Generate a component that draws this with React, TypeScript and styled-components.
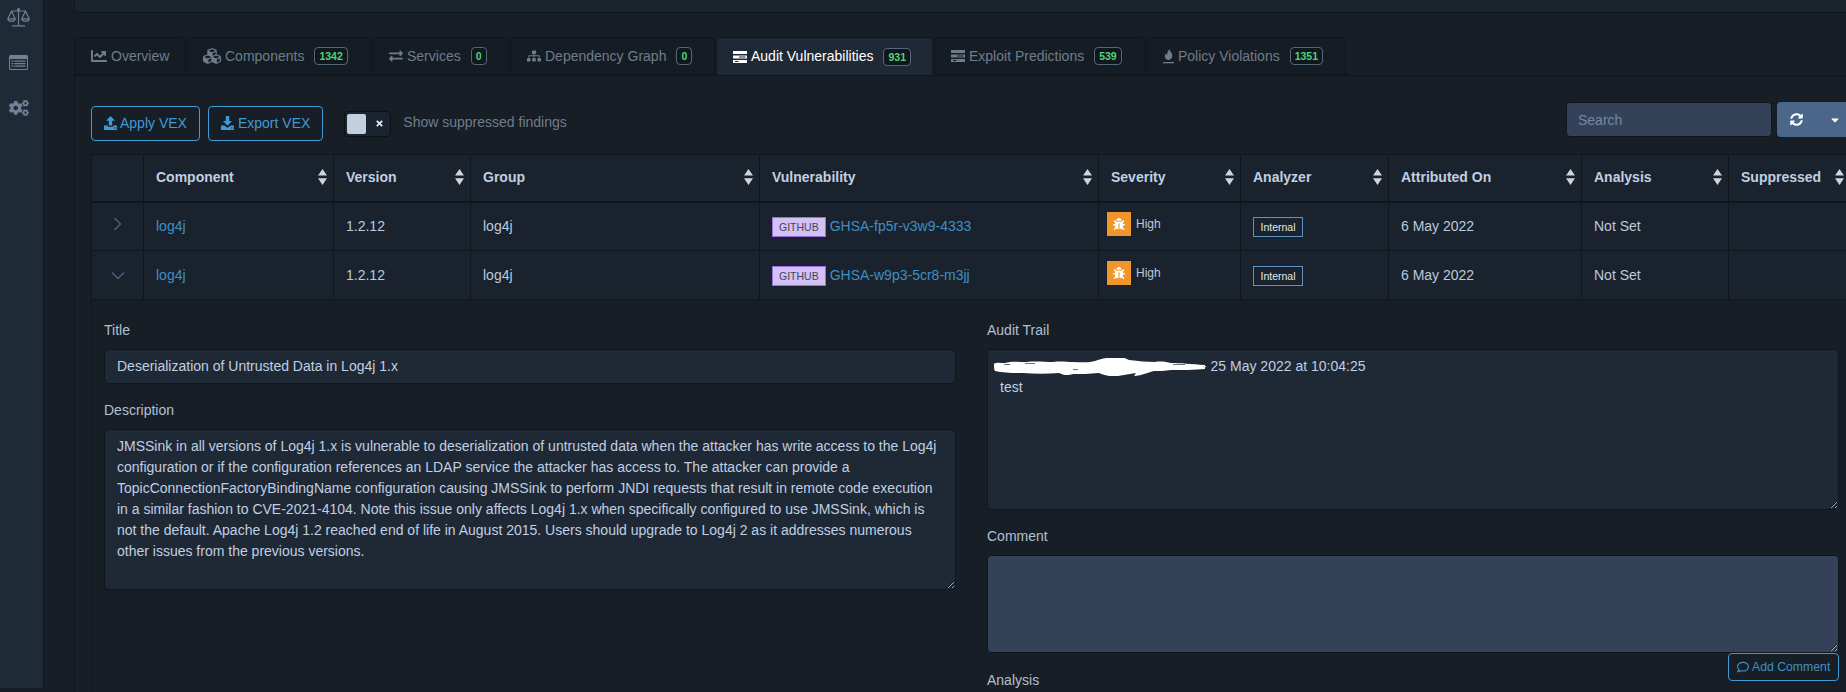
import React from "react";
import styled, { createGlobalStyle } from "styled-components";
import { FaChartLine, FaCubes, FaExchangeAlt, FaSitemap, FaBug, FaSyncAlt, FaRegComment, FaCaretDown, FaCogs } from "react-icons/fa";

const Global = createGlobalStyle`
  html, body { margin: 0; padding: 0; width: 1846px; height: 692px; overflow: hidden; background: #171e26; }
  body { font-family: "Liberation Sans", Arial, sans-serif; font-size: 14px; line-height: 21px; color: #c0cfe2; }
  * { box-sizing: border-box; }
`;

const Page = styled.div`
  display: flex;
  width: 1846px;
  height: 692px;
  overflow: hidden;
`;
const Sidebar = styled.nav`
  flex: none;
  width: 44px;
  height: 688px;
  background: #1f2a37;
  border-right: 1px solid #10161d;
  color: #6f8196;
  display: flex;
  flex-direction: column;
  padding-right: 6px;
`;
const SideItems = styled.div`
  margin-top: -5px;
  display: flex;
  flex-direction: column;
`;
const SideItem = styled.div`
  height: 45px;
  display: flex;
  align-items: center;
  justify-content: center;
`;
const Main = styled.main`
  flex: none;
  width: 1802px;
  margin-left: 30px;
`;
const TopCard = styled.div`
  height: 13px;
  margin-bottom: 24px;
  background: #1b242e;
  border: 1px solid #10161d;
  border-top: 0;
  border-right: 0;
  border-bottom-left-radius: 4px;
`;
const Tabs = styled.div`
  display: flex;
  height: 38px;
  gap: 1px;
`;
const Tab = styled.div<{ $active?: boolean; $w: number }>`
  display: flex;
  align-items: center;
  padding: 0 0 0 16px;
  width: ${(p) => p.$w}px;
  background: ${(p) => (p.$active ? "#1f2935" : "#151c24")};
  color: ${(p) => (p.$active ? "#ffffff" : "#6f7c8a")};
  border: 1px solid #10161d;
  border-bottom: ${(p) => (p.$active ? "0" : "1px solid #10161d")};
  border-radius: 4px 4px 0 0;
  white-space: nowrap;
`;
const TabIcon = styled.span`
  display: inline-flex;
  margin-right: 4px;
`;
const Count = styled.span`
  display: inline-block;
  margin-left: 10px;
  height: 18px;
  line-height: 16px;
  padding: 0 4px;
  font-size: 10.5px;
  font-weight: 700;
  color: #4fd37a;
  background: #10181e;
  border: 1px solid #56677a;
  border-radius: 4px;
`;
const Panel = styled.section`
  border-top: 1px solid #10161d;
  border-left: 1px solid #10161d;
  padding: 0 0 0 16px;
  width: 1790px;
  height: 640px;
  background: #171e26;
`;
const Toolbar = styled.div`
  display: flex;
  justify-content: space-between;
  align-items: flex-start;
  width: 1759px;
  padding-top: 26px;
  margin-bottom: 13px;
`;
const ToolLeft = styled.div`
  display: flex;
  align-items: center;
  margin-top: 4px;
  height: 35px;
`;
const OutlineButton = styled.button`
  display: inline-flex;
  align-items: center;
  gap: 3px;
  height: 35px;
  padding: 0 12px 1px;
  margin-right: 8px;
  background: transparent;
  color: #3f9ad6;
  border: 1px solid #3f9ad6;
  border-radius: 4px;
  font: 14px "Liberation Sans", Arial, sans-serif;
`;
const ExportButton = styled(OutlineButton)`
  gap: 4px;
`;
const Toggle = styled.div`
  width: 47px;
  height: 26px;
  margin: 0 12px 0 13px;
  padding: 2px;
  display: flex;
  align-items: center;
  background: #1a2430;
  border: 1px solid #0c1116;
  border-radius: 4px;
  color: #e4e9f0;
`;
const Knob = styled.div`
  width: 19px;
  height: 20px;
  margin-right: 10px;
  background: #c2cfe1;
  border-radius: 2px;
`;
const ToggleLabel = styled.span`
  color: #6f7c8a;
  margin-top: -2px;
`;
const ToolRight = styled.div`
  display: flex;
  gap: 5px;
`;
const Search = styled.input`
  width: 206px;
  height: 35px;
  padding: 0 11px;
  background: #334259;
  border: 1px solid #10161d;
  border-radius: 4px;
  color: #c0cfe2;
  font: 14px "Liberation Sans", Arial, sans-serif;
  &::placeholder { color: #7388a5; opacity: 1; }
`;
const SplitButton = styled.div`
  display: flex;
  width: 73px;
  height: 35px;
  align-items: center;
  background: #4a6689;
  border-radius: 4px 0 0 4px;
  color: #fff;
  padding: 0 9px 0 13px;
  justify-content: space-between;
`;
const Table = styled.table`
  width: 1759px;
  table-layout: fixed;
  border-collapse: collapse;
  background: #1a232d;
`;
const Col = styled.col<{ $w: number }>`
  width: ${(p) => p.$w}px;
`;
const Th = styled.th`
  height: 47px;
  padding: 0 6px 1px 12px;
  text-align: left;
  font-weight: 700;
  color: #c0cfe2;
  border: 1px solid #10161d;
  border-bottom: 2px solid #10161d;
`;
const ThInner = styled.div`
  display: flex;
  align-items: center;
  justify-content: space-between;
`;
const Td = styled.td`
  height: 49px;
  padding: 0 12px;
  color: #bccadb;
  border: 1px solid #10161d;
`;
const ChevronCell = styled(Td)`
  padding: 0;
  text-align: center;
  color: #4a6180;
`;
const Link = styled.a`
  color: #3f8fc4;
`;
const SourceBadge = styled.span`
  display: inline-block;
  height: 20px;
  line-height: 18px;
  padding: 0 6px;
  margin-right: 4px;
  font-size: 10.5px;
  color: #44435a;
  background: #d3c0f5;
  border: 1px solid #9b6ddf;
`;
const SevCell = styled(Td)`
  padding: 0 0 0 8px;
`;
const Severity = styled.div`
  display: flex;
  align-items: center;
  gap: 5px;
  font-size: 12px;
  margin-top: -4px;
`;
const SevBox = styled.span`
  width: 24px;
  height: 24px;
  background: #f0972b;
  color: #fff;
  display: flex;
  align-items: center;
  justify-content: center;
`;
const AnalyzerBadge = styled.span`
  display: inline-block;
  height: 20px;
  line-height: 18px;
  padding: 0 6.5px;
  font-size: 10.5px;
  color: #e0e8f0;
  border: 1px solid #5d94c8;
`;
const DetailCell = styled.td`
  padding: 0;
  height: 400px;
  vertical-align: top;
  background: #171e26;
  border-left: 1px solid #10161d;
`;
const DetailGrid = styled.div`
  display: grid;
  grid-template-columns: 852px 852px;
  column-gap: 31px;
  padding: 20px 12px 0;
`;
const Group = styled.div`
  margin-bottom: 16px;
`;
const Label = styled.label`
  display: block;
  margin-bottom: 8px;
  color: #b1c0d3;
  font-weight: 400;
`;
const Field = styled.div`
  height: 35px;
  padding: 6px 12px;
  background: #1f2935;
  border: 1px solid #10161d;
  border-radius: 4px;
  color: #c0cfe2;
`;
const Area = styled.textarea<{ $h: number; $empty?: boolean }>`
  display: block;
  width: 100%;
  height: ${(p) => p.$h}px;
  padding: 6px 12px;
  background: ${(p) => (p.$empty ? "#334259" : "#1f2935")};
  border: 1px solid #10161d;
  border-radius: 4px;
  color: #c0cfe2;
  font: 14px/21px "Liberation Sans", Arial, sans-serif;
  resize: vertical;
  outline: none;
`;
const Trail = styled.div`
  height: 161px;
  padding: 6px 12px;
  background: #1f2935;
  border: 1px solid #10161d;
  border-radius: 4px;
  overflow: auto;
  resize: vertical;
  color: #c0cfe2;
`;
const TrailHead = styled.div`
  display: flex;
  align-items: center;
  margin-left: -7px;
  height: 21px;
  white-space: pre;
`;
const Dash = styled.span`
  margin-left: -3px;
`;
const CommentActions = styled.div`
  display: flex;
  justify-content: flex-end;
  height: 13px;
`;
const SmallButton = styled.button`
  flex: none;
  display: inline-flex;
  align-items: center;
  gap: 3px;
  height: 28px;
  width: 111px;
  padding: 0 0 0 8px;
  background: #171e26;
  color: #3f8fc4;
  border: 1px solid #3f9ad6;
  border-radius: 4px;
  white-space: nowrap;
  font: 12.25px "Liberation Sans", Arial, sans-serif;
`;
const AnalysisLabel = styled(Label)`
  margin-top: -12px;
`;

const Sort = () => (
  <svg width="9" height="16" viewBox="0 0 9 16" fill="#d0d4d9" style={{ flex: "none" }}>
    <path d="M4.5 0 9 6.6H0zM0 9.2h9L4.5 16z" />
  </svg>
);
const Scale = () => (
  <svg width="23" height="19" viewBox="0 0 23 19" fill="none" stroke="currentColor" strokeWidth="1.2">
    <path d="M11.5 1v16M5 17.8h13M4 3h15" />
    <circle cx="11.5" cy="1.6" r="1" />
    <path d="M4.5 3 1 10.5M4.5 3 8 10.5M18.5 3 15 10.5M18.5 3 22 10.5M.8 10.8c.6 3.2 6.800 3.200 7.400 0zM14.800 10.800c.6 3.200 6.800 3.200 7.400 0z" />
  </svg>
);
const ListPanel = () => (
  <svg width="19" height="15" viewBox="0 0 19 15" fill="currentColor">
    <path fillRule="evenodd" d="M1.500 0h16A1.500 1.500 0 0 1 19 1.500v12a1.500 1.500 0 0 1-1.500 1.500h-16A1.500 1.500 0 0 1 0 13.500v-12A1.500 1.500 0 0 1 1.500 0zM1 4v9.500c0 .3.200.5.500.5h16c.3 0 .5-.2.500-.5V4z" />
    <path d="M2.500 5.500h2v1.200h-2zM5.500 5.500h11v1.200h-11zM2.500 8h2v1.200h-2zM5.500 8h11v1.200h-11zM2.500 10.500h2v1.200h-2zM5.500 10.500h11v1.200h-11z" />
  </svg>
);
const Tasks = () => (
  <svg width="14" height="12" viewBox="0 0 14 12" fill="currentColor">
    <path fillRule="evenodd" d="M0 0h14v3H0zM0 4.500h14v3H0zM6 5.500v1h6.500v-1zM0 9h14v3H0zM2 10v1h3.500v-1z" />
  </svg>
);
const Flame = () => (
  <svg width="11" height="15" viewBox="0 0 11 15" fill="currentColor">
    <path d="M6.500 0c.5 2.500 2.800 3.800 2.800 6.800 0 2.300-1.700 4.200-3.800 4.200S1.800 9.300 1.800 7.200c0-1.400.7-2.200 1.300-3 .1 1 .4 1.500 1 1.800C3.900 3.800 5 1.800 6.500 0z" />
    <path d="M0 13h11v1.300H0z" />
  </svg>
);
const Upload = () => (
  <svg width="13" height="14" viewBox="0 0 13 14" fill="currentColor">
    <path d="M6.500 0 11 4.700H8.200V9.500H4.800V4.700H2z" />
    <path fillRule="evenodd" d="M0 9.500h3.800v1.300h5.400V9.500H13V14H0zM10 11.500v1h.9v-1zM11.500 11.500v1h.9v-1z" />
  </svg>
);
const Download = () => (
  <svg width="13" height="14" viewBox="0 0 13 14" fill="currentColor">
    <path d="M4.800 0h3.400v5H11L6.500 9.800 2 5h2.800z" />
    <path fillRule="evenodd" d="M0 9.500h3.200l3.300 2.300 3.300-2.300H13V14H0zM10 11.500v1h.9v-1zM11.500 11.500v1h.9v-1z" />
  </svg>
);
const Cross = () => (
  <svg width="7" height="7" viewBox="0 0 7 7" stroke="currentColor" strokeWidth="1.800">
    <path d="M.8.8l5.400 5.400M6.200.8.800 6.200" />
  </svg>
);
const ChevronRight = () => (
  <svg width="9" height="14" viewBox="0 0 9 14" fill="none" stroke="currentColor" strokeWidth="1.400">
    <path d="M1.500 1 7.500 7l-6 6" />
  </svg>
);
const ChevronDown = () => (
  <svg width="14" height="9" viewBox="0 0 14 9" fill="none" stroke="currentColor" strokeWidth="1.400">
    <path d="M1 1.500 7 7.500l6-6" />
  </svg>
);
const Redaction = () => (
  <svg width="212" height="18" viewBox="0 0 212 18" style={{ flex: "none" }}>
    <path fill="#ffffff" d="M0 6c4-2 8-1 12-1 6-2 14-1 22-1 8-1 18 0 26 0 8-1 14 0 20 0 8 0 16 1 22-1 6-2 10-3 18-4 8-1 12 1 16 3 10 1 18 2 26 2 6-1 12 0 16 1 10 0 20 1 34 2 1 1 1 3 0 4-10 1-24 1-34 1-6 1-12 1-17 1-8 2-14 5-20 5 1-1 1-2 2-3-6 1-12 2-18 3-8 1-14-1-19-3-10 1-18 1-26 1-6 2-10 1-14-1-12 1-24 1-36 0-10 0-20 0-28-2-1-1-1-4-1-7z" />
    <path fill="#3a4656" d="M11 6h6v.8h-6zM32 5h10v.8H32zM80 11h5v.8h-5zM180 6h12v.8h-12z" />
  </svg>
);

const columns = [
  { w: 52, t: "" },
  { w: 190, t: "Component" },
  { w: 137, t: "Version" },
  { w: 289, t: "Group" },
  { w: 339, t: "Vulnerability" },
  { w: 142, t: "Severity" },
  { w: 148, t: "Analyzer" },
  { w: 193, t: "Attributed On" },
  { w: 147, t: "Analysis" },
  { w: 122, t: "Suppressed" },
];

const tabs = [
  { w: 111, icon: <FaChartLine size={16} />, t: "Overview" },
  { w: 185, icon: <FaCubes size={18} />, t: "Components", c: "1342" },
  { w: 137, icon: <FaExchangeAlt size={14} />, t: "Services", c: "0" },
  { w: 205, icon: <FaSitemap size={14} />, t: "Dependency Graph", c: "0" },
  { w: 217, icon: <Tasks />, t: "Audit Vulnerabilities", c: "931", a: true },
  { w: 211, icon: <Tasks />, t: "Exploit Predictions", c: "539" },
  { w: 200, icon: <Flame />, t: "Policy Violations", c: "1351" },
];

const description =
  "JMSSink in all versions of Log4j 1.x is vulnerable to deserialization of untrusted data when the attacker has write access to the Log4j configuration or if the configuration references an LDAP service the attacker has access to. The attacker can provide a TopicConnectionFactoryBindingName configuration causing JMSSink to perform JNDI requests that result in remote code execution in a similar fashion to CVE-2021-4104. Note this issue only affects Log4j 1.x when specifically configured to use JMSSink, which is not the default. Apache Log4j 1.2 reached end of life in August 2015. Users should upgrade to Log4j 2 as it addresses numerous other issues from the previous versions.";

const rows = [
  { id: "GHSA-fp5r-v3w9-4333", open: false },
  { id: "GHSA-w9p3-5cr8-m3jj", open: true },
];

export default function App() {
  return (
    <Page>
      <Global />
      <Sidebar>
        <SideItems>
          <SideItem><Scale /></SideItem>
          <SideItem><ListPanel /></SideItem>
          <SideItem><FaCogs size={20} /></SideItem>
        </SideItems>
      </Sidebar>
      <Main>
        <TopCard />
        <Tabs>
          {tabs.map((t) => (
            <Tab key={t.t} $active={t.a} $w={t.w}>
              <TabIcon>{t.icon}</TabIcon>
              {t.t}
              {t.c && <Count>{t.c}</Count>}
            </Tab>
          ))}
        </Tabs>
        <Panel>
          <Toolbar>
            <ToolLeft>
              <OutlineButton><Upload />Apply VEX</OutlineButton>
              <ExportButton><Download />Export VEX</ExportButton>
              <Toggle><Knob /><Cross /></Toggle>
              <ToggleLabel>Show suppressed findings</ToggleLabel>
            </ToolLeft>
            <ToolRight>
              <Search placeholder="Search" />
              <SplitButton><FaSyncAlt size={13} /><FaCaretDown size={12} /></SplitButton>
            </ToolRight>
          </Toolbar>
          <Table>
            <colgroup>
              {columns.map((c, i) => <Col key={i} $w={c.w} />)}
            </colgroup>
            <thead>
              <tr>
                {columns.map((c, i) => (
                  <Th key={i}>
                    {c.t && <ThInner>{c.t}<Sort /></ThInner>}
                  </Th>
                ))}
              </tr>
            </thead>
            <tbody>
              {rows.map((r) => (
                <tr key={r.id}>
                  <ChevronCell>{r.open ? <ChevronDown /> : <ChevronRight />}</ChevronCell>
                  <Td><Link>log4j</Link></Td>
                  <Td>1.2.12</Td>
                  <Td>log4j</Td>
                  <Td><SourceBadge>GITHUB</SourceBadge><Link>{r.id}</Link></Td>
                  <SevCell>
                    <Severity><SevBox><FaBug size={12} /></SevBox>High</Severity>
                  </SevCell>
                  <Td><AnalyzerBadge>Internal</AnalyzerBadge></Td>
                  <Td>6 May 2022</Td>
                  <Td>Not Set</Td>
                  <Td />
                </tr>
              ))}
              <tr>
                <DetailCell colSpan={10}>
                  <DetailGrid>
                    <div>
                      <Group>
                        <Label>Title</Label>
                        <Field>Deserialization of Untrusted Data in Log4j 1.x</Field>
                      </Group>
                      <Group>
                        <Label>Description</Label>
                        <Area $h={161} readOnly defaultValue={description} />
                      </Group>
                    </div>
                    <div>
                      <Group>
                        <Label>Audit Trail</Label>
                        <Trail>
                          <TrailHead><Redaction /><Dash>- 25 May 2022 at 10:04:25</Dash></TrailHead>
                          test
                        </Trail>
                      </Group>
                      <Group>
                        <Label>Comment</Label>
                        <Area $h={98} $empty />
                        <CommentActions>
                          <SmallButton><FaRegComment size={12} />Add Comment</SmallButton>
                        </CommentActions>
                      </Group>
                      <AnalysisLabel>Analysis</AnalysisLabel>
                    </div>
                  </DetailGrid>
                </DetailCell>
              </tr>
            </tbody>
          </Table>
        </Panel>
      </Main>
    </Page>
  );
}
